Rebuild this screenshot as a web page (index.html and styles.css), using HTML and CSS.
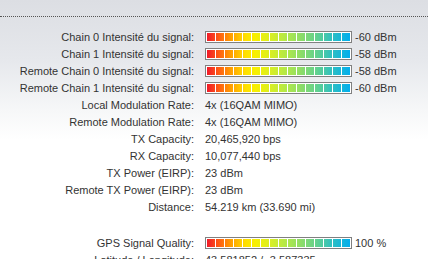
FILE: index.html
```html
<!DOCTYPE html>
<html>
<head>
<meta charset="utf-8">
<link rel="stylesheet" href="styles.css">
</head>
<body>
<div class="header"></div>
<div class="stats">
  <div class="label">Chain 0 Intensité du signal:</div>
  <div class="value"><span class="bar"><span class="fill"></span></span><span class="num">-60 dBm</span></div>
  <div class="label">Chain 1 Intensité du signal:</div>
  <div class="value"><span class="bar"><span class="fill"></span></span><span class="num">-58 dBm</span></div>
  <div class="label">Remote Chain 0 Intensité du signal:</div>
  <div class="value"><span class="bar"><span class="fill"></span></span><span class="num">-58 dBm</span></div>
  <div class="label">Remote Chain 1 Intensité du signal:</div>
  <div class="value"><span class="bar"><span class="fill"></span></span><span class="num">-60 dBm</span></div>
  <div class="label">Local Modulation Rate:</div>
  <div class="value">4x (16QAM MIMO)</div>
  <div class="label">Remote Modulation Rate:</div>
  <div class="value">4x (16QAM MIMO)</div>
  <div class="label">TX Capacity:</div>
  <div class="value">20,465,920 bps</div>
  <div class="label">RX Capacity:</div>
  <div class="value">10,077,440 bps</div>
  <div class="label">TX Power (EIRP):</div>
  <div class="value">23 dBm</div>
  <div class="label">Remote TX Power (EIRP):</div>
  <div class="value">23 dBm</div>
  <div class="label">Distance:</div>
  <div class="value">54.219 km (33.690 mi)</div>
  <div class="spacer"></div>
  <div class="label">GPS Signal Quality:</div>
  <div class="value"><span class="bar"><span class="fill"></span></span><span class="num">100 %</span></div>
  <div class="label">Latitude / Longitude:</div>
  <div class="value">43.581852 / -3.587335</div>
</div>
</body>
</html>
```
FILE: styles.css
```css
html, body {
  margin: 0;
  padding: 0;
}
body {
  width: 428px;
  height: 259px;
  overflow: hidden;
  font-family: "Liberation Sans", Arial, sans-serif;
  font-size: 11px;
  color: #333;
  background: linear-gradient(to bottom, #dcdee3 0px, #e6e8ec 60px, #f6f7f8 110px, #ffffff 140px);
}
.header {
  height: 16px;
  border-bottom: 1px dotted #555;
}
.stats {
  display: grid;
  grid-template-columns: 194px 1fr;
  column-gap: 11px;
  grid-auto-rows: minmax(17px, auto);
  align-items: center;
  margin-top: 11px;
}
.spacer {
  grid-column: 1 / -1;
  height: 19px;
}
.label {
  text-align: right;
  white-space: nowrap;
}
.value {
  display: flex;
  align-items: center;
  white-space: nowrap;
}
.bar {
  display: block;
  width: 143px;
  height: 8px;
  padding: 1px;
  border: 1px solid #808080;
  background: #fff;
}
.fill {
  display: block;
  width: 143px;
  height: 8px;
  background:
    repeating-linear-gradient(to right, transparent 0 8px, #fff 8px 9px),
    linear-gradient(to right, #f01a2a 0%, #ff5a14 8%, #ffa000 17%, #ffe000 27%, #f8f000 34%, #d4ee28 46%, #b0e84a 56%, #8cdc68 66%, #5ccf94 78%, #2cbec4 88%, #00aeee 100%);
}
.num {
  margin-left: 3px;
}
```
